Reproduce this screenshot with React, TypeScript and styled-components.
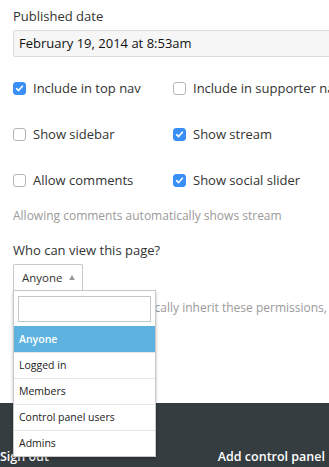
import styled, { createGlobalStyle } from 'styled-components'

const GlobalStyle = createGlobalStyle`
  html, body {
    margin: 0;
    padding: 0;
    background: #fff;
    font-family: "Open Sans", "Liberation Sans", sans-serif;
    color: #333;
    overflow: hidden;
  }
`

const options = ['Anyone', 'Logged in', 'Members', 'Control panel users', 'Admins']

const checks = [
  { label: 'Include in top nav', checked: true },
  { label: 'Include in supporter nav', checked: false },
  { label: 'Show sidebar', checked: false },
  { label: 'Show stream', checked: true },
  { label: 'Allow comments', checked: false },
  { label: 'Show social slider', checked: true },
]

function Check({ checked, label }: { checked: boolean; label: string }) {
  return (
    <CheckRow>
      <Box $checked={checked}>
        {checked && (
          <svg width="9" height="9" viewBox="0 0 9 9">
            <path d="M1.6 4.7 L3.6 6.6 L7.4 2.2" fill="none" stroke="#fff" strokeWidth="1.6" strokeLinecap="round" strokeLinejoin="round" />
          </svg>
        )}
      </Box>
      <CheckLabel>{label}</CheckLabel>
    </CheckRow>
  )
}

export default function App() {
  return (
    <>
      <GlobalStyle />
      <Page>
        <Content>
          <FieldLabel>Published date</FieldLabel>
          <DateInput>February 19, 2014 at 8:53am</DateInput>

          <CheckGrid>
            {checks.map(c => (
              <Check key={c.label} checked={c.checked} label={c.label} />
            ))}
          </CheckGrid>

          <Help>Allowing comments automatically shows stream</Help>

          <Question>Who can view this page?</Question>

          <SelectWrap>
            <SelectButton>
              Anyone
              <Arrow />
            </SelectButton>
            <Dropdown>
              <SearchBox />
              {options.map((o, i) => (
                <Option key={o} $active={i === 0}>{o}</Option>
              ))}
            </Dropdown>
          </SelectWrap>

          <Note>All subpages do automatically inherit these permissions,</Note>
        </Content>

        <Footer>
          <FooterLink>Sign out</FooterLink>
          <FooterLink>Add control panel</FooterLink>
        </Footer>
      </Page>
    </>
  )
}

const Page = styled.div`
  width: 329px;
  height: 467px;
  display: flex;
  flex-direction: column;
  overflow: hidden;
`

const Content = styled.div`
  flex: 1;
  padding: 7px 0 0 13px;
`

const FieldLabel = styled.div`
  font-size: 13px;
  line-height: 18px;
  color: #333;
`

const DateInput = styled.div`
  margin-top: 5px;
  width: 340px;
  height: 27px;
  box-sizing: border-box;
  border: 1px solid #dcdcdc;
  border-radius: 2px;
  background: #f6f6f6;
  padding: 0 5px;
  font-size: 13px;
  line-height: 25px;
  color: #111;
  white-space: nowrap;
`

const CheckGrid = styled.div`
  display: grid;
  grid-template-columns: 160px 180px;
  grid-auto-rows: 46px;
  margin-top: 8px;
  white-space: nowrap;
`

const CheckRow = styled.label`
  display: flex;
  align-items: center;
  gap: 7px;
`

const Box = styled.span<{ $checked: boolean }>`
  width: 13px;
  height: 13px;
  box-sizing: border-box;
  border-radius: 3px;
  display: flex;
  align-items: center;
  justify-content: center;
  background: ${p => (p.$checked ? '#3a8ff7' : '#fff')};
  border: 1px solid ${p => (p.$checked ? '#3a8ff7' : '#b5b5b5')};
`

const CheckLabel = styled.span`
  font-size: 13px;
  color: #333;
`

const Help = styled.div`
  margin-top: 4px;
  font-size: 12px;
  line-height: 18px;
  color: #9a9a9a;
  white-space: nowrap;
`

const Note = styled.div`
  margin-top: 8px;
  font-size: 12px;
  line-height: 20px;
  color: #9a9a9a;
  white-space: nowrap;
`

const Question = styled.div`
  margin-top: 16px;
  font-size: 13px;
  line-height: 18px;
  color: #333;
`

const SelectWrap = styled.div`
  position: relative;
  margin-top: 5px;
  width: 70px;
`

const SelectButton = styled.div`
  height: 26px;
  box-sizing: border-box;
  border: 1px solid #c8c8c8;
  border-bottom: none;
  border-radius: 2px 2px 0 0;
  background: #fff;
  display: flex;
  align-items: center;
  justify-content: space-between;
  padding: 0 7px 0 8px;
  font-size: 11.5px;
  color: #333;
`

const Arrow = styled.span`
  width: 0;
  height: 0;
  border-left: 3px solid transparent;
  border-right: 3px solid transparent;
  border-bottom: 5px solid #9a9a9a;
`

const Dropdown = styled.div`
  position: absolute;
  top: 26px;
  left: 0;
  width: 143px;
  box-sizing: border-box;
  border: 1px solid #c8c8c8;
  background: #fff;
  box-shadow: 0 2px 3px rgba(0, 0, 0, 0.25);
  z-index: 2;
`

const SearchBox = styled.div`
  margin: 5px 4px 4px 4px;
  height: 26px;
  box-sizing: border-box;
  border: 1px solid #c6c6c6;
`

const Option = styled.div<{ $active: boolean }>`
  height: 26px;
  box-sizing: border-box;
  padding-left: 5px;
  border-top: 1px solid ${p => (p.$active ? '#5db2e0' : '#e6e6e6')};
  background: ${p => (p.$active ? '#5db2e0' : '#fff')};
  color: ${p => (p.$active ? '#fff' : '#222')};
  font-weight: ${p => (p.$active ? 600 : 400)};
  font-size: 10.5px;
  line-height: 25px;
  white-space: nowrap;
`

const Footer = styled.div`
  height: 63px;
  background: #363d40;
  display: flex;
  justify-content: space-between;
  align-items: flex-end;
  padding: 0 4px 1px 0;
`

const FooterLink = styled.span`
  font-size: 12.5px;
  font-weight: 600;
  color: #fff;
  line-height: 18px;
  white-space: nowrap;
`
